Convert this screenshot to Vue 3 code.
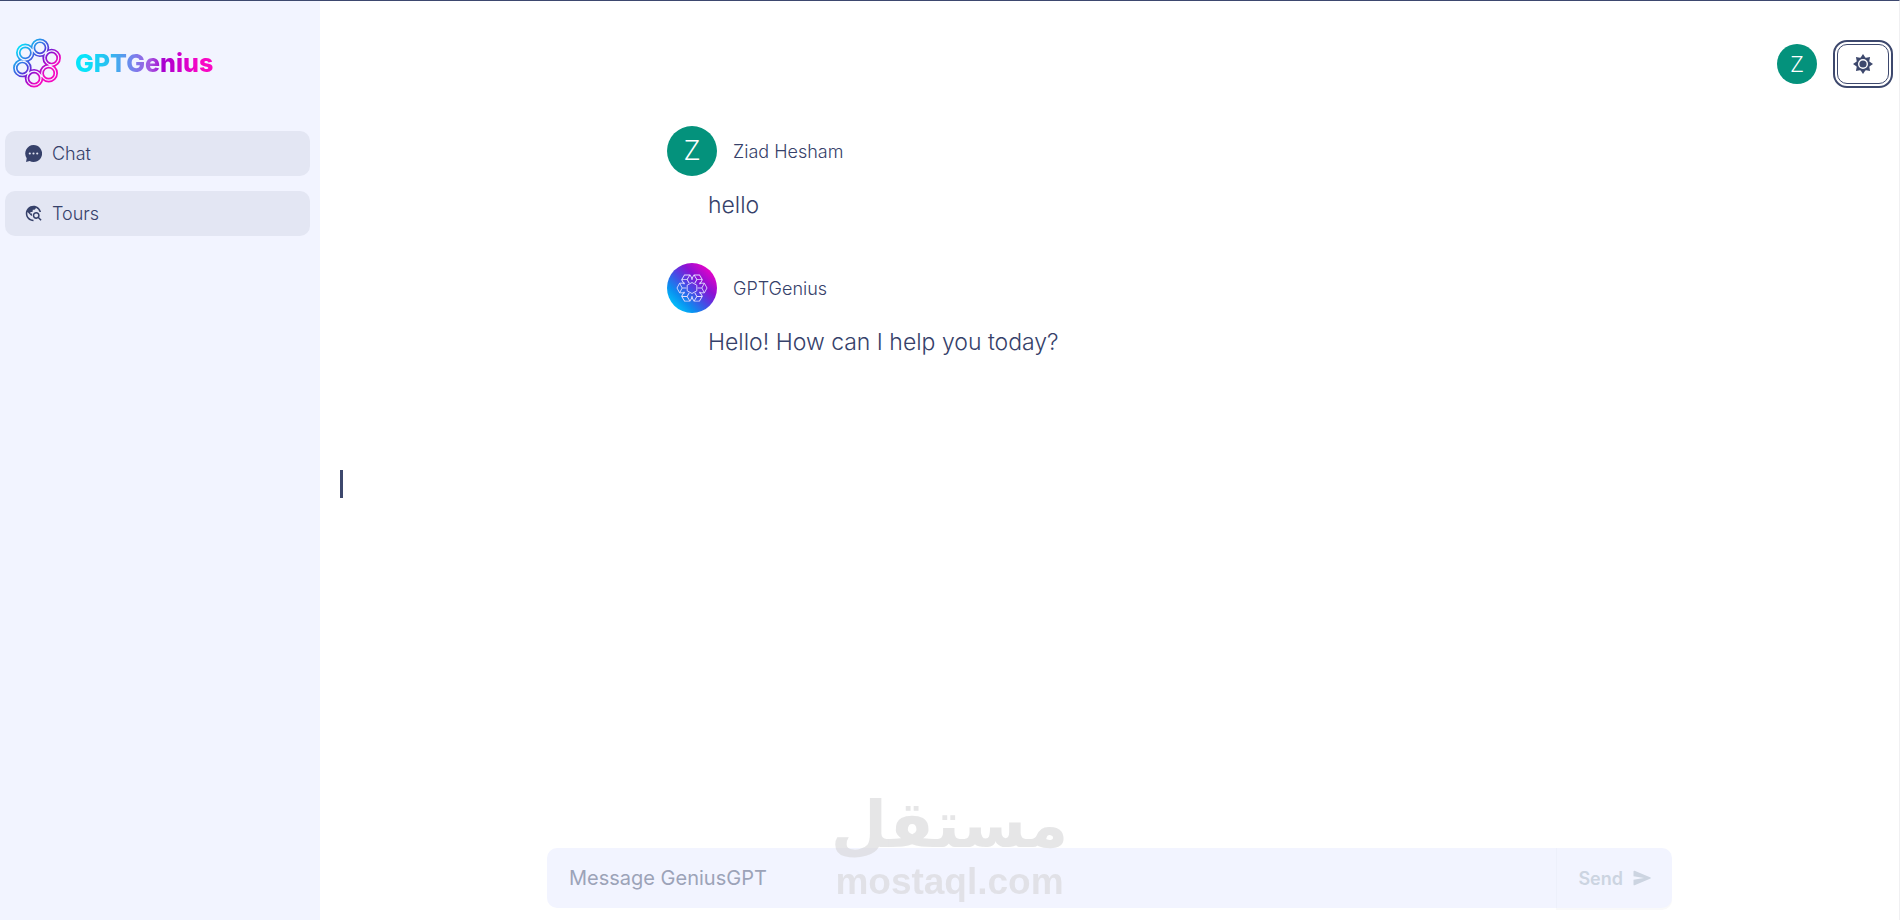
<template>
  <div class="layout">
    <aside class="sidebar">
      <div class="brand">
        <svg class="brand-logo" viewBox="-25 -25 50 50" aria-hidden="true">
          <defs>
            <linearGradient id="brandStroke" gradientUnits="userSpaceOnUse" x1="-17" y1="-17" x2="15" y2="14">
              <stop offset="0" stop-color="#08dcf8" />
              <stop offset="0.45" stop-color="#4a45dc" />
              <stop offset="0.6" stop-color="#8a10d0" />
              <stop offset="0.85" stop-color="#f408c0" />
            </linearGradient>
          </defs>
          <path :d="ringPath" fill="none" stroke="url(#brandStroke)" stroke-width="4.6" />
          <path :d="ringPath" fill="none" stroke="#f2f4ff" stroke-width="1.2" />
        </svg>
        <span class="brand-name">GPTGenius</span>
      </div>
      <nav class="menu">
        <a href="#chat" class="menu-item">
          <svg viewBox="0 0 16 16" class="menu-icon" aria-hidden="true">
            <path d="M8 0a8 8 0 1 1-3.6 15.1L1 16l.6-3.6A8 8 0 0 1 8 0z" fill="currentColor" />
            <circle cx="4.5" cy="8" r="1" fill="#e3e6f3" />
            <circle cx="8" cy="8" r="1" fill="#e3e6f3" />
            <circle cx="11.5" cy="8" r="1" fill="#e3e6f3" />
          </svg>
          Chat
        </a>
        <a href="#tours" class="menu-item">
          <svg viewBox="1 1 22 22" class="menu-icon" fill="currentColor" aria-hidden="true">
            <path d="M19.3 16.9c.4-.7.7-1.5.7-2.4 0-2.5-2-4.5-4.5-4.5S11 12 11 14.5s2 4.5 4.5 4.5c.9 0 1.7-.3 2.4-.7l3.2 3.2 1.4-1.4-3.2-3.2zm-3.8.1c-1.4 0-2.5-1.1-2.5-2.5s1.1-2.5 2.5-2.5 2.5 1.1 2.5 2.5-1.1 2.5-2.5 2.5zM12 20v2C6.48 22 2 17.52 2 12S6.48 2 12 2c4.84 0 8.87 3.44 9.8 8h-2.07A8 8 0 0 0 15 4.59V5c0 1.1-.9 2-2 2h-2v2c0 .55-.45 1-1 1H8v2h2v3H9l-4.79-4.79C4.08 10.79 4 11.38 4 12c0 4.41 3.59 8 8 8z" />
          </svg>
          Tours
        </a>
      </nav>
    </aside>

    <main class="content">
      <header class="topbar">
        <span class="avatar small">Z</span>
        <button type="button" class="theme-toggle" aria-label="Toggle theme">
          <svg viewBox="-10 -10 20 20" class="sun" aria-hidden="true">
            <path
              v-for="angle in rayAngles"
              :key="angle"
              d="M-3 -5.6 0 -10 3 -5.6z"
              :transform="`rotate(${angle})`"
              fill="currentColor"
            />
            <circle r="5.8" fill="none" stroke="currentColor" stroke-width="1.6" />
            <circle r="3.6" fill="currentColor" />
          </svg>
        </button>
      </header>

      <span class="cursor"></span>

      <section class="messages">
        <article v-for="message in messages" :key="message.id" class="message">
          <div class="author">
            <span v-if="message.role === 'user'" class="avatar">Z</span>
            <span v-else class="avatar bot">
              <svg viewBox="-16 -16 32 32" class="bot-logo" aria-hidden="true">
                <g fill="none" stroke="#e2dcff" stroke-width="0.9" stroke-linejoin="round">
                  <path d="M0 -5.5 4.8 -2.8V2.8L0 5.5-4.8 2.8V-2.8z" />
                  <path
                    v-for="angle in cubeAngles"
                    :key="angle"
                    d="M-4.8 -7V-12.4L0 -15 4.8 -12.4V-7M-4.8 -12.4 0 -9.8 4.8 -12.4M0 -9.8V-5.5"
                    :transform="`rotate(${angle})`"
                  />
                </g>
              </svg>
            </span>
            <span class="author-name">{{ message.author }}</span>
          </div>
          <p class="message-text">{{ message.text }}</p>
        </article>
      </section>

      <form class="composer" @submit.prevent="sendMessage">
        <input
          v-model="draft"
          type="text"
          class="composer-input"
          placeholder="Message GeniusGPT"
          aria-label="Message GeniusGPT"
        />
        <button type="submit" class="composer-send" :disabled="!draft">
          Send
          <svg viewBox="0 0 18 16" class="send-icon" aria-hidden="true">
            <path d="M1.6.7 17 7.2a.8.8 0 0 1 0 1.6L1.6 15.3Q.5 15.5.5 14.4V9.7L11 8 .5 6.3V1.6Q.5.5 1.6.7z" fill="currentColor" />
          </svg>
        </button>
      </form>
    </main>

    <div class="watermark">
      <span class="watermark-arabic" lang="ar" dir="rtl">مستقل</span>
      <span class="watermark-latin">mostaql.com</span>
    </div>
  </div>
</template>

<script setup>
import { ref } from 'vue';

const draft = ref('');

const messages = ref([
  { id: 1, role: 'user', author: 'Ziad Hesham', text: 'hello' },
  { id: 2, role: 'bot', author: 'GPTGenius', text: 'Hello! How can I help you today?' },
]);

const sendMessage = () => {
  messages.value.push({
    id: messages.value.length + 1,
    role: 'user',
    author: 'Ziad Hesham',
    text: draft.value,
  });
  draft.value = '';
};

const rayAngles = [0, 45, 90, 135, 180, 225, 270, 315];
const cubeAngles = [30, 90, 150, 210, 270, 330];

// six rings around the centre, each one crossing over to the next
const rotate = (x, y, degrees) => {
  const a = (degrees * Math.PI) / 180;
  return [x * Math.cos(a) - y * Math.sin(a), x * Math.sin(a) + y * Math.cos(a)];
};

const ringPath = [0, 1, 2, 3, 4, 5]
  .map((i) => {
    const angle = 11 + i * 60;
    const [cx, cy] = rotate(0, -15.5, angle);
    const from = rotate(6.9, -15.9, angle);
    const to = rotate(6.5, -7.2, angle);
    return `M${cx - 7} ${cy}a7 7 0 1 0 14 0a7 7 0 1 0 -14 0M${from}L${to}`;
  })
  .join('');
</script>

<style>
body {
  margin: 0;
  background-color: #ffffff;
}
</style>

<style scoped>
.layout {
  position: relative;
  display: grid;
  grid-template-columns: 320px 1fr;
  box-sizing: border-box;
  min-height: 100vh;
  overflow: hidden;
  border-top: 1px solid #3d486f;
  border-right: 1px solid #f0f0f2;
  color: #36416a;
  font-family: Inter, "Liberation Sans", sans-serif;
  font-size: 18px;
  font-weight: 300;
}

.sidebar {
  padding: 37px 10px 20px 5px;
  background-color: #f2f4ff;
}

.brand {
  display: flex;
  align-items: center;
  gap: 13px;
  padding-left: 7px;
  margin-bottom: 43px;
}

.brand-logo {
  width: 50px;
  height: 50px;
}

.brand-name {
  background-image: linear-gradient(90deg, #08e4fa 8%, #2cbcf0 25%, #7b7eec 43%, #a35ae0 54%, #a800d0 64%, #d400cc 78%, #f808c4 90%);
  background-clip: text;
  color: transparent;
  font-size: 25px;
  font-weight: 800;
  line-height: 30px;
}

.menu {
  display: flex;
  flex-direction: column;
  gap: 15px;
}

.menu-item {
  display: flex;
  align-items: center;
  gap: 10px;
  height: 45px;
  padding: 0 20px;
  border-radius: 10px;
  background-color: #e3e6f3;
  color: inherit;
  text-decoration: none;
}

.menu-icon {
  width: 17px;
  height: 17px;
}

.content {
  position: relative;
  display: flex;
  flex-direction: column;
}

.topbar {
  display: flex;
  justify-content: flex-end;
  gap: 20px;
  padding: 43px 10px 42px;
}

.avatar {
  display: flex;
  align-items: center;
  justify-content: center;
  width: 50px;
  height: 50px;
  border-radius: 50%;
  background-color: #04927c;
  color: #ffffff;
  font-family: Roboto, sans-serif;
  font-size: 27px;
  font-weight: 300;
}

.avatar.small {
  width: 40px;
  height: 40px;
  font-size: 22px;
}

.avatar.bot {
  background-image: linear-gradient(45deg, #02c4fa 12%, #0a90f0 28%, #4a48e4 48%, #8a12d4 65%, #e404c8 86%);
}

.bot-logo {
  width: 32px;
  height: 32px;
}

.theme-toggle {
  display: flex;
  align-items: center;
  justify-content: center;
  width: 52px;
  height: 40px;
  padding: 0;
  border: 1px solid #3d486d;
  border-radius: 10px;
  outline: 2px solid #3d486d;
  outline-offset: 2px;
  background-color: #ffffff;
  color: #3d486d;
}

.sun {
  width: 20px;
  height: 20px;
}

.cursor {
  position: absolute;
  top: 50%;
  left: 20px;
  width: 3px;
  height: 28px;
  margin-top: 9px;
  background-color: #3d486d;
}

.messages {
  flex: 1;
  box-sizing: border-box;
  width: 100%;
  max-width: 885px;
  margin: 0 auto;
}

.message {
  margin-bottom: 38px;
}

.author {
  display: flex;
  align-items: center;
  gap: 16px;
}

.message-text {
  margin: 9px 0 0 41px;
  font-size: 23px;
  line-height: 40px;
}

.composer {
  display: flex;
  align-items: flex-start;
  box-sizing: border-box;
  width: calc(100% - 40px);
  max-width: 1125px;
  margin: 0 auto 12px;
}

.composer-input {
  flex: 1;
  min-width: 0;
  box-sizing: border-box;
  height: 60px;
  padding: 0 22px;
  border: none;
  border-radius: 10px 0 0 10px;
  outline: none;
  background-color: #f2f4ff;
  color: #3d486d;
  font-family: inherit;
  font-size: 20px;
  font-weight: 400;
}

.composer-input::placeholder {
  color: #9ca3b8;
  opacity: 1;
}

.composer-send {
  display: flex;
  align-items: center;
  gap: 10px;
  height: 60px;
  padding: 0 21px;
  border: none;
  border-left: 1px solid #edf0fb;
  border-radius: 0 10px 10px 0;
  background-color: #f2f4ff;
  box-shadow: 0 2px 0 #f9f9fa;
  color: #ccd4e1;
  font-family: inherit;
  font-size: 18px;
  font-weight: 600;
}

.send-icon {
  width: 18px;
  height: 16px;
}

.watermark {
  position: absolute;
  bottom: 16px;
  left: 50%;
  display: flex;
  flex-direction: column;
  align-items: center;
  transform: translateX(-50%);
  color: #d6d6d8;
  opacity: 0.6;
  pointer-events: none;
}

.watermark-arabic {
  font-family: "DejaVu Sans", sans-serif;
  font-size: 65px;
  font-weight: 700;
  line-height: 70px;
}

.watermark-latin {
  font-family: "Liberation Sans", Arial, sans-serif;
  font-size: 37px;
  font-weight: 700;
  line-height: 44px;
}
</style>
